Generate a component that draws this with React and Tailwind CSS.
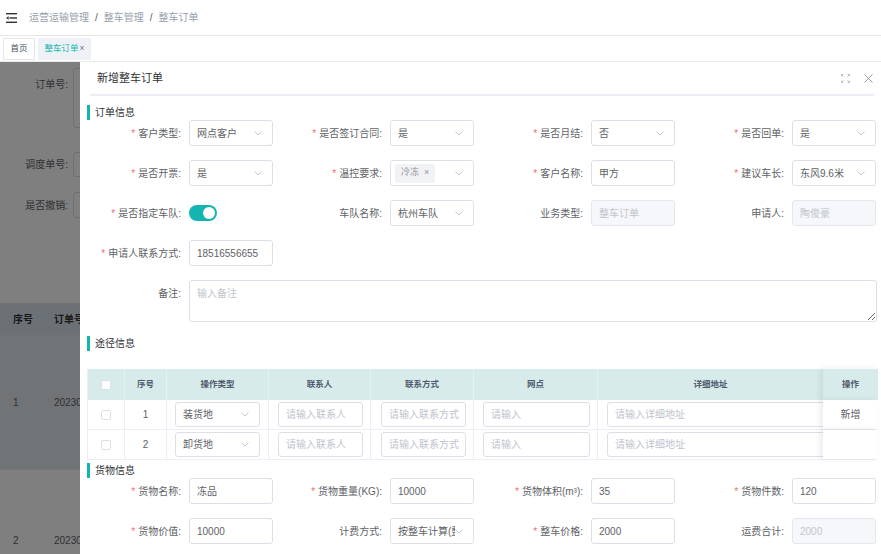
import React from 'react';

const Chevron = () => (
  <svg width="8" height="5" viewBox="0 0 8 5" className="shrink-0">
    <path d="M0.5 0.6 L4 4 L7.5 0.6" fill="none" stroke="#c0c4cc" strokeWidth="0.9" />
  </svg>
);

const Select = ({ value, w = 'w-[84px]', h = 'h-[26px]' }) => (
  <div className={`${w} ${h} flex items-center justify-between overflow-hidden border border-[#dcdfe6] rounded-[3px] bg-white pl-[7px] pr-[10px]`}>
    <span className="whitespace-nowrap overflow-hidden text-[#606266]">{value}</span>
    <Chevron />
  </div>
);

const Input = ({ value, placeholder, disabled, w = 'w-[84px]', h = 'h-[26px]' }) => (
  <div
    className={`${w} ${h} shrink-0 flex items-center overflow-hidden rounded-[3px] border px-[7px] ${
      disabled ? 'bg-[#f5f7fa] border-[#e4e7ed] text-[#c0c4cc]' : 'bg-white border-[#dcdfe6] text-[#606266]'
    }`}
  >
    {value ? (
      <span className="whitespace-nowrap">{value}</span>
    ) : (
      <span className="whitespace-nowrap text-[#c0c4cc]">{placeholder}</span>
    )}
  </div>
);

const Field = ({ label, req, children }) => (
  <div className="flex items-center">
    <div className="w-[100px] shrink-0 pr-[8px] text-right text-[#606266] whitespace-nowrap">
      {req && <span className="text-[#f56c6c] mr-[3px]">*</span>}
      {label}:
    </div>
    {children}
  </div>
);

const Section = ({ title }) => (
  <div className="flex items-center h-[15px]">
    <div className="w-[3px] h-[15px] bg-[#13b5b1]" />
    <span className="ml-[5px] text-[10px] text-[#303133]">{title}</span>
  </div>
);

const Checkbox = () => <div className="w-[10px] h-[10px] border border-[#dcdfe6] rounded-[2px] bg-white" />;

const cols = 'grid grid-cols-[37px_42px_102px_102px_103px_124px_225px_55px]';

const routes = [
  { no: 1, type: '装货地', op: '新增' },
  { no: 2, type: '卸货地', op: '' },
];

export default function App() {
  return (
    <div className="w-[881px] h-[554px] overflow-hidden bg-white flex flex-col font-['Liberation_Sans','Noto_Sans_CJK_SC',sans-serif] text-[10px]">
      {/* top bar */}
      <div className="h-[36px] shrink-0 flex items-center pl-[6px] border-b border-[#e6e6e6]">
        <svg width="11" height="10" viewBox="0 0 11 10">
          <rect x="0" y="0" width="11" height="1.4" fill="#303133" />
          <rect x="3.5" y="4.3" width="7.5" height="1.4" fill="#303133" />
          <path d="M0 5 L2.6 3.2 L2.6 6.8 Z" fill="#303133" />
          <rect x="0" y="8.6" width="11" height="1.4" fill="#303133" />
        </svg>
        <div className="ml-[12px] flex items-center text-[10px] text-[#97a0ab]">
          <span>运营运输管理</span>
          <span className="mx-[6px] text-[#555]">/</span>
          <span>整车管理</span>
          <span className="mx-[6px] text-[#555]">/</span>
          <span>整车订单</span>
        </div>
      </div>

      {/* tags */}
      <div className="h-[26px] shrink-0 flex items-center gap-[3px] pl-[3px] border-b border-[#eaeaea]">
        <div className="h-[22px] w-[32px] flex items-center justify-center border border-[#e4e7ed] bg-white text-[8.5px] text-[#495060]">首页</div>
        <div className="h-[22px] w-[53px] flex items-center justify-center bg-[#eef1f6] text-[8.5px] text-[#13b5b1]">
          整车订单<span className="ml-[1px] text-[#777]">×</span>
        </div>
      </div>

      {/* content */}
      <div className="relative flex-1 overflow-hidden">
        <div className="pt-[6px] text-[#606266]">
          <div className="flex">
            <div className="w-[73px] pr-[5px] pt-[9px] text-right">订单号:</div>
            <div className="w-[200px] h-[60px] border border-[#dcdfe6] rounded-[3px]" />
          </div>
          <div className="flex items-center mt-[24px]">
            <div className="w-[73px] pr-[5px] text-right">调度单号:</div>
            <div className="w-[200px] h-[25px] border border-[#dcdfe6] rounded-[3px]" />
          </div>
          <div className="flex items-center mt-[15px]">
            <div className="w-[73px] pr-[5px] text-right">是否撤销:</div>
            <div className="w-[200px] h-[26px] border border-[#dcdfe6] rounded-[3px]" />
          </div>
          <div className="mt-[85px]">
            <div className="flex h-[32px] items-center bg-[#d8e2ea] font-bold text-[#333]">
              <div className="w-[45px] pl-[13px]">序号</div>
              <div className="pl-[9px]">订单号</div>
            </div>
            <div className="flex h-[135px] items-center bg-[#e2e8ee] border-b border-[#ebeef5]">
              <div className="w-[45px] pl-[13px]">1</div>
              <div className="pl-[9px]">20230215</div>
            </div>
            <div className="flex h-[90px] items-end pb-[12px]">
              <div className="w-[45px] pl-[13px]">2</div>
              <div className="pl-[9px]">20230215</div>
            </div>
          </div>
        </div>

        <div className="absolute inset-0 bg-black/50" />

        {/* dialog */}
        <div className="absolute left-[80px] top-0 right-0 h-[620px] bg-white">
          <div className="ml-[10px] mr-[7px] h-[34px] flex items-center justify-between border-b-2 border-[#ebeef5] pl-[7px]">
            <span className="text-[11px] text-[#303133]">新增整车订单</span>
            <div className="flex items-center gap-[14px] pr-[1px]">
              <svg width="9" height="9" viewBox="0 0 9 9" fill="none" stroke="#b4b8bf" strokeWidth="0.8">
                <path d="M0.5 2.5 V0.5 H2.5 M0.5 0.5 L2.6 2.6" />
                <path d="M6.5 0.5 H8.5 V2.5 M8.5 0.5 L6.4 2.6" />
                <path d="M0.5 6.5 V8.5 H2.5 M0.5 8.5 L2.6 6.4" />
                <path d="M8.5 6.5 V8.5 H6.5 M8.5 8.5 L6.4 6.4" />
              </svg>
              <svg width="9" height="9" viewBox="0 0 9 9" stroke="#909399" strokeWidth="0.9">
                <path d="M0.5 0.5 L8.5 8.5 M8.5 0.5 L0.5 8.5" />
              </svg>
            </div>
          </div>

          <div className="pt-[9px] pl-[7px]">
            <Section title="订单信息" />
            <div className="ml-[2px] grid grid-cols-[repeat(4,201px)] gap-y-[14px]">
              <Field label="客户类型" req><Select value="网点客户" /></Field>
              <Field label="是否签订合同" req><Select value="是" /></Field>
              <Field label="是否月结" req><Select value="否" /></Field>
              <Field label="是否回单" req><Select value="是" /></Field>

              <Field label="是否开票" req><Select value="是" /></Field>
              <Field label="温控要求" req>
                <div className="w-[84px] h-[26px] flex items-center justify-between border border-[#dcdfe6] rounded-[3px] bg-white pl-[4px] pr-[10px]">
                  <span className="h-[19px] px-[6px] bg-[#f0f2f5] rounded-[3px] text-[#909399] text-[9px] flex items-center gap-[5px]">
                    冷冻<span className="text-[9px]">×</span>
                  </span>
                  <Chevron />
                </div>
              </Field>
              <Field label="客户名称" req><Input value="甲方" /></Field>
              <Field label="建议车长" req><Select value="东风9.6米" /></Field>

              <Field label="是否指定车队" req>
                <div className="w-[28px] h-[16px] rounded-full bg-[#13b5b1] flex items-center justify-end pr-[2px]">
                  <div className="w-[12px] h-[12px] rounded-full bg-white" />
                </div>
              </Field>
              <Field label="车队名称"><Select value="杭州车队" /></Field>
              <Field label="业务类型"><Input value="整车订单" disabled /></Field>
              <Field label="申请人"><Input value="陶俊豪" disabled /></Field>

              <div className="col-span-4">
                <Field label="申请人联系方式" req><Input value="18516556655" /></Field>
              </div>

              <div className="col-span-4 flex items-start">
                <div className="w-[100px] shrink-0 pr-[8px] pt-[6px] text-right text-[#606266]">备注:</div>
                <textarea
                  readOnly
                  placeholder="输入备注"
                  className="w-[688px] h-[42px] border border-[#dcdfe6] rounded-[3px] px-[7px] py-[5px] text-[10px] text-[#606266] placeholder:text-[#c0c4cc] outline-none"
                />
              </div>
            </div>

            <div className="mt-[14px]">
              <Section title="途径信息" />
            </div>

            <div className="mt-[18px] w-[790px] border-l border-[#ebeef5]">
              <div className={`${cols} h-[31px] bg-[#d7ecea] font-bold text-[8.5px] text-[#515a6e]`}>
                <div className="flex items-center justify-center border-r border-[#e6f2f1]"><Checkbox /></div>
                <div className="flex items-center justify-center border-r border-[#e6f2f1]">序号</div>
                <div className="flex items-center justify-center border-r border-[#e6f2f1]">操作类型</div>
                <div className="flex items-center justify-center border-r border-[#e6f2f1]">联系人</div>
                <div className="flex items-center justify-center border-r border-[#e6f2f1]">联系方式</div>
                <div className="flex items-center justify-center border-r border-[#e6f2f1]">网点</div>
                <div className="flex items-center justify-center">详细地址</div>
                <div className="relative z-10 flex items-center justify-center bg-[#d7ecea] shadow-[-3px_0_6px_rgba(0,0,0,0.08)]">操作</div>
              </div>
              {routes.map((r) => (
                <div key={r.no} className={`${cols} h-[30px] border-b border-[#ebeef5] text-[#606266]`}>
                  <div className="flex items-center justify-center border-r border-[#ebeef5]"><Checkbox /></div>
                  <div className="flex items-center justify-center border-r border-[#ebeef5]">{r.no}</div>
                  <div className="flex items-center pl-[8px] border-r border-[#ebeef5]"><Select value={r.type} w="w-[85px]" h="h-[25px]" /></div>
                  <div className="flex items-center pl-[9px] border-r border-[#ebeef5]"><Input placeholder="请输入联系人" w="w-[85px]" h="h-[25px]" /></div>
                  <div className="flex items-center pl-[10px] border-r border-[#ebeef5]"><Input placeholder="请输入联系方式" w="w-[85px]" h="h-[25px]" /></div>
                  <div className="flex items-center pl-[9px] border-r border-[#ebeef5]"><Input placeholder="请输入" w="w-[107px]" h="h-[25px]" /></div>
                  <div className="flex items-center pl-[9px] overflow-hidden"><Input placeholder="请输入详细地址" w="w-[230px]" h="h-[25px]" /></div>
                  <div className="relative z-10 flex items-center justify-center bg-white shadow-[-3px_0_6px_rgba(0,0,0,0.08)]">{r.op}</div>
                </div>
              ))}
            </div>

            <div className="mt-[3px]">
              <Section title="货物信息" />
            </div>
            <div className="ml-[2px] grid grid-cols-[repeat(4,201px)] gap-y-[14px]">
              <Field label="货物名称" req><Input value="冻品" /></Field>
              <Field label="货物重量(KG)" req><Input value="10000" /></Field>
              <Field label="货物体积(m³)" req><Input value="35" /></Field>
              <Field label="货物件数" req><Input value="120" /></Field>

              <Field label="货物价值" req><Input value="10000" /></Field>
              <Field label="计费方式"><Select value="按整车计算(整车)" /></Field>
              <Field label="整车价格" req><Input value="2000" /></Field>
              <Field label="运费合计"><Input value="2000" disabled /></Field>
            </div>
          </div>
        </div>
      </div>
    </div>
  );
}
